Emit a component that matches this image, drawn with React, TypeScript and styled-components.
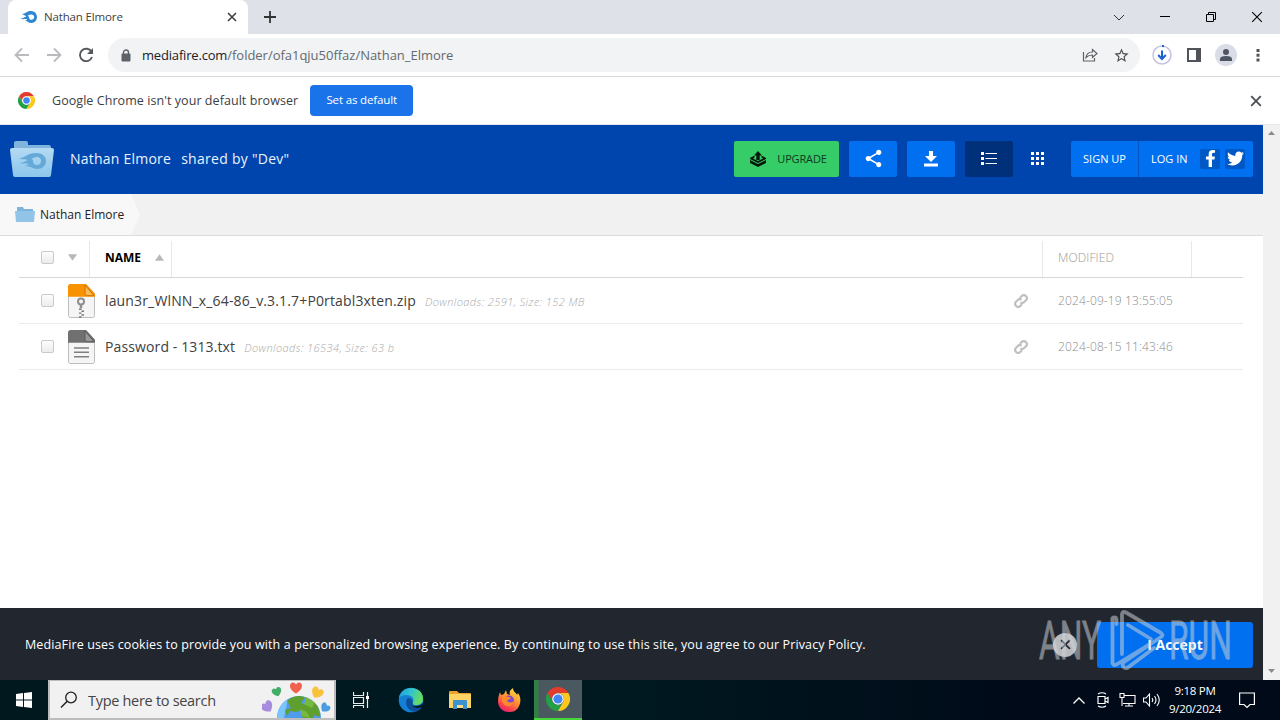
import styled, { createGlobalStyle } from "styled-components";
import { MdShare, MdStarBorder } from "react-icons/md";
import { FaFacebookF, FaTwitter } from "react-icons/fa";

const GlobalStyle = createGlobalStyle`
  * {
    box-sizing: border-box;
  }
  body {
    margin: 0;
    overflow: hidden;
    font-family: "Open Sans", "Noto Sans", sans-serif;
  }
  svg {
    display: block;
    flex: none;
  }
  button {
    border: 0;
    padding: 0;
    background: none;
    font-family: inherit;
  }
`;

const SScreen = styled.div`
  position: relative;
  width: 1280px;
  height: 720px;
  display: flex;
  flex-direction: column;
  background: white;
  overflow: hidden;
`;

const SText = styled.span<{
  $size: number;
  $color?: string;
  $spacing?: number;
  $weight?: number;
}>`
  font-size: ${({ $size }) => $size}px;
  color: ${({ $color }) => $color || "#222"};
  letter-spacing: ${({ $spacing }) => $spacing || 0}px;
  font-weight: ${({ $weight }) => $weight || 400};
  line-height: 18px;
  white-space: pre;
`;

/* browser */

const STabStrip = styled.div`
  height: 34px;
  background: #dee1e8;
  display: flex;
  align-items: center;
  padding-left: 8px;
`;

const STab = styled.div`
  width: 240px;
  height: 34px;
  background: white;
  border-radius: 8px 8px 0 0;
  display: flex;
  align-items: center;
  padding: 0 11px 0 12px;
  gap: 7px;
  & > :last-child {
    margin-left: auto;
  }
`;

const SNewTab = styled.button`
  width: 44px;
  height: 28px;
  display: flex;
  align-items: center;
  justify-content: center;
`;

const SWindowButtons = styled.div`
  margin-left: auto;
  display: flex;
  button {
    width: 46px;
    height: 28px;
    display: flex;
    align-items: center;
    justify-content: center;
  }
`;

const SToolbar = styled.div`
  height: 43px;
  display: flex;
  align-items: center;
  padding: 0 20px 0 14px;
  border-bottom: 1px solid #d8d9dc;
`;

const SNavButtons = styled.div`
  display: flex;
  gap: 16px;
  margin-right: 14px;
`;

const SAddressBar = styled.div`
  width: 1032px;
  height: 34px;
  border-radius: 17px;
  background: #f1f3f5;
  display: flex;
  align-items: center;
  padding: 0 10px 0 13px;
  gap: 15px;
`;

const SAddress = styled.div`
  flex: 1;
  display: flex;
  margin-left: -4px;
`;

const SToolbarIcons = styled.div`
  display: flex;
  align-items: center;
  margin-left: auto;
`;

const SAvatar = styled.div`
  width: 22px;
  height: 22px;
  border-radius: 50%;
  background: #dadce6;
  display: flex;
  align-items: center;
  justify-content: center;
  margin: 0 19px 0 14px;
`;

const SInfoBar = styled.div`
  height: 48px;
  display: flex;
  align-items: center;
  padding: 0 18px 0 18px;
  border-bottom: 1px solid #e3e6ea;
`;

const SDefaultButton = styled.button`
  width: 103px;
  height: 31px;
  margin-left: 12px;
  padding-bottom: 2px;
  border-radius: 4px;
  background: #1a73e8;
`;

/* page */

const SViewport = styled.div`
  height: 555px;
  display: flex;
`;

const SPage = styled.main`
  width: 1263px;
  display: flex;
  flex-direction: column;
`;

const SScrollbar = styled.div`
  width: 17px;
  background: #f1f1f1;
  display: flex;
  flex-direction: column;
  justify-content: space-between;
  align-items: center;
  padding: 6px 0 7px;
`;

const SHeader = styled.header`
  height: 69px;
  background: #0045ad;
  display: flex;
  align-items: center;
  padding: 0 10px 2px;
`;

const SOwner = styled.div`
  display: flex;
  width: 664px;
  margin-left: 16px;
  gap: 10px;
`;

const SHeaderButton = styled.button<{
  $width?: number;
  $background?: string;
  $left?: number;
}>`
  width: ${({ $width }) => $width || 48}px;
  height: 36px;
  padding-left: ${({ $left }) => $left || 0}px;
  border-radius: 2px;
  background: ${({ $background }) => $background || "#0070f0"};
  display: flex;
  align-items: center;
  justify-content: center;
  margin-right: 10px;
  gap: 11px;
`;

const SAccount = styled.div`
  width: 182px;
  height: 36px;
  margin-left: auto;
  background: #0070f0;
  border-radius: 2px;
  display: flex;
  align-items: center;
`;

const SSignUp = styled.div`
  width: 68px;
  height: 36px;
  border-right: 1px solid #0053bd;
  display: flex;
  align-items: center;
  justify-content: center;
`;

const SLogIn = styled.div`
  width: 61px;
  padding-left: 12px;
  display: flex;
`;

const SSocial = styled.div`
  width: 20px;
  height: 20px;
  margin-right: 5px;
  border-radius: 2px;
  background: #0058c4;
  display: flex;
  align-items: center;
  justify-content: center;
`;

const SBreadcrumbs = styled.nav`
  height: 42px;
  background: #f1f1f1;
  border-bottom: 1px solid #dcdcdc;
  display: flex;
`;

const SCrumb = styled.div`
  width: 140px;
  height: 41px;
  background: #f8f8f8;
  clip-path: polygon(0 0, 131px 0, 140px 50%, 131px 100%, 0 100%);
  display: flex;
  align-items: center;
  padding-left: 15px;
  gap: 5px;
`;

const STable = styled.section`
  flex: 1;
  padding: 0 19px 0 19px;
`;

const SRow = styled.div<{ $head?: boolean }>`
  height: ${({ $head }) => ($head ? 42 : 46)}px;
  width: 1224px;
  border-bottom: 1px solid ${({ $head }) => ($head ? "#d6d6d6" : "#ececec")};
  display: flex;
  align-items: center;
`;

const SHeadCell = styled.div<{
  $width: number;
  $left?: number;
  $right?: number;
}>`
  width: ${({ $width }) => $width}px;
  height: 36px;
  margin-top: 5px;
  padding: 0 ${({ $right }) => $right || 7}px 3px ${({ $left }) => $left || 0}px;
  border-right: 1px solid #e8e8e8;
  display: flex;
  align-items: center;
  justify-content: space-between;
`;

const SCheckbox = styled.div`
  width: 13px;
  height: 13px;
  border: 1px solid #cacaca;
  border-radius: 2px;
  background: linear-gradient(#fdfdfd, #ececec);
`;

const SFileName = styled.div`
  width: 890px;
  display: flex;
  padding-left: 10px;
  gap: 9px;
  align-items: center;
`;

const SDetails = styled.em`
  font-size: 11px;
  color: #aaa;
  line-height: 18px;
  letter-spacing: 0.41px;
  font-weight: 300;
  padding-top: 2px;
`;

const SRowIcon = styled.div`
  width: 29px;
  margin-left: 29px;
`;

const SCookieBar = styled.footer`
  height: 72px;
  background: #22272f;
  display: flex;
  align-items: center;
  justify-content: space-between;
  padding: 1px 10px 0 25px;
`;

const SCookieActions = styled.div`
  display: flex;
  align-items: center;
  gap: 20px;
`;

const SClose = styled.button`
  width: 24px;
  height: 24px;
  border-radius: 50%;
  background: #b9bbbd;
  display: flex;
  align-items: center;
  justify-content: center;
`;

const SAccept = styled.button`
  width: 156px;
  height: 46px;
  border-radius: 3px;
  background: #0070f0;
`;

/* taskbar */

const STaskbar = styled.div`
  height: 40px;
  background: linear-gradient(90deg, #00181e, #001820 50%, #000a18 80%);
  display: flex;
  align-items: center;
`;

const SStart = styled.div`
  width: 48px;
  display: flex;
  justify-content: center;
`;

const SSearch = styled.div`
  width: 288px;
  height: 40px;
  background: #f1f1f1;
  border: 2px solid #bcbcbc;
  border-top-width: 1px;
  display: flex;
  align-items: center;
  padding-left: 10px;
  gap: 10px;
  svg:last-child {
    margin-left: auto;
  }
`;

const STask = styled.div<{ $active?: boolean }>`
  width: ${({ $active }) => ($active ? 48 : 49)}px;
  height: 40px;
  display: flex;
  align-items: center;
  justify-content: center;
  background: ${({ $active }) =>
    $active ? "linear-gradient(90deg, #347f43 4px, #4a5960 5px)" : "none"};
  border-bottom: ${({ $active }) => ($active ? "2px solid #46d63c" : "0")};
`;

const STray = styled.div`
  margin-left: auto;
  display: flex;
  align-items: center;
  gap: 7px;
  padding-right: 25px;
`;

const SClock = styled.div`
  width: 62px;
  height: 36px;
  margin: 0 6px 0 -3px;
  display: flex;
  flex-direction: column;
  align-items: center;
`;

/* watermark over the page */

const SWatermark = styled.div`
  position: absolute;
  left: 1039px;
  top: 608px;
  height: 66px;
  display: flex;
  align-items: center;
  opacity: 0.52;
`;

const SWatermarkText = styled.div<{ $width: number }>`
  width: ${({ $width }) => $width}px;
  height: 66px;
  span {
    display: block;
    width: max-content;
    font-family: Roboto, sans-serif;
    font-size: 53px;
    line-height: 66px;
    color: #d0d4da;
    transform: scaleX(0.6);
    transform-origin: left;
    -webkit-text-stroke: 0.8px #d0d4da;
  }
`;

const Chrome = ({ size }: { size: number }) => (
  <svg width={size} height={size} viewBox="0 0 24 24">
    <path d="M1.6 6A12 12 0 0 1 22.4 6H12a6 6 0 0 0-5.2 9z" fill="#e33b2e" />
    <path d="M1.6 6A12 12 0 0 0 12 24l5.2-9A6 6 0 0 1 6.8 15z" fill="#23a047" />
    <path d="M22.4 6A12 12 0 0 1 12 24l5.2-9A6 6 0 0 0 12 6z" fill="#fcc81d" />
    <circle cx="12" cy="12" r="5.8" fill="white" />
    <circle cx="12" cy="12" r="4.6" fill="#4285f4" />
  </svg>
);

const Flame = ({ width, color }: { width: number; color: string }) => (
  <svg width={width} height={width * 0.7} viewBox="0 0 30 21">
    <path
      fill={color}
      fillRule="evenodd"
      d="M3 5C9 6 11 0 19 0c7 0 11 5 11 10.500S26 21 20 21c-5 0-7-4-11-4 2-1 3-1 4-2-4-2-8 1-13-2 5 1 7-3 11-3C8 7 6 7 3 5zM20 6c-3 0-5 1-7 3 2 0 3 1 3 2.500 0 3 2 4 4 4 3 0 5-2 5-5S23 6 20 6z"
    />
  </svg>
);

const Cross = ({
  size,
  color,
  width,
}: {
  size: number;
  color: string;
  width: number;
}) => (
  <svg width={size} height={size} viewBox="0 0 10 10">
    <path d="M1 1l8 8M9 1L1 9" stroke={color} strokeWidth={width} />
  </svg>
);

const Triangle = ({ up }: { up?: boolean }) => (
  <svg width="9" height="7" viewBox="0 0 10 7">
    <path d={up ? "M0 7L5 0l5 7z" : "M0 0h10L5 7z"} fill="#b8b8b8" />
  </svg>
);

const ScrollArrow = ({ up }: { up?: boolean }) => (
  <svg width="7" height="4" viewBox="0 0 7 4">
    <path d={up ? "M0 4L3.5 0 7 4z" : "M0 0h7L3.500 4z"} fill="#8c8c8c" />
  </svg>
);

const BigFolder = () => (
  <svg width="44" height="37" viewBox="0 0 44 37">
    <defs>
      <linearGradient id="folder" x1="0" y1="0" x2="0" y2="1">
        <stop offset="0" stopColor="#b4daf3" />
        <stop offset="1" stopColor="#8cc6ec" />
      </linearGradient>
    </defs>
    <path d="M4 3q0-2 2-2h10q2 0 2 2v2h21q2 0 2 3v5H4z" fill="#7fb4dc" />
    <path
      d="M2 8h40q2 0 2 2l-3 25q0 2-2 2H5q-2 0-2-2L0 10q0-2 2-2z"
      fill="url(#folder)"
    />
    <path
      d="M9 18c5 1 8-5 17-5 6 0 10 3 10 8s-4 8-9 8c-4 0-6-3-12-3l4-2c-4-1-6 0-10-1 4 0 6-2 9-3-3-1-6 0-9-2zM27 17c-3 0-4 1-6 2 2 0 2 1 2 2 0 3 2 4 4 4s4-1 4-4-2-4-4-4z"
      fill="#64a9d8"
      fillRule="evenodd"
    />
  </svg>
);

const SmallFolder = () => (
  <svg width="20" height="17" viewBox="0 0 20 17">
    <path d="M2 1h6l1 2h9v4H2z" fill="#7db4dd" />
    <path d="M0 5h20l-1 11H1z" fill="#92c4e8" />
  </svg>
);

const FileIcon = ({ zip }: { zip?: boolean }) => (
  <svg
    width="27"
    height="34"
    viewBox="0 0 27 35"
    preserveAspectRatio="none"
    style={{ marginTop: 1 }}
  >
    <path
      d="M2.500.5H18l8.500 9.500v22.500q0 2-2 2h-22q-2 0-2-2V2.500q0-2 2-2z"
      fill="#f5f5f5"
      stroke="#bcbcbc"
    />
    <path
      d="M0 13V3q0-3 3-3h15l9 10v3z"
      fill={zip ? "#f79200" : "#707070"}
    />
    <path
      d="M17 1v9q0 2 2 2h7z"
      fill={zip ? "#ffb84f" : "#999"}
      stroke={zip ? "#c87508" : "#5c5c5c"}
    />
    {zip ? (
      <>
        <circle
          cx="13"
          cy="18"
          r="3"
          fill="none"
          stroke="#8f8f8f"
          strokeWidth="2"
        />
        <path d="M13 21v4" stroke="#8f8f8f" strokeWidth="2.500" />
        <path
          d="M11 26h2.500M13.500 28h2.500M11 30h2.500M13.500 32h2.500M11 34h2.500"
          stroke="#777"
          strokeWidth="1.500"
        />
      </>
    ) : (
      <path
        d="M6 18.500h15M6 23h15M6 27.500h15"
        stroke="#7f7f7f"
        strokeWidth="1.600"
      />
    )}
  </svg>
);

const LinkIcon = () => (
  <svg width="14" height="14" viewBox="0 0 14 14">
    <g
      transform="rotate(-45 7 7)"
      fill="none"
      stroke="#c0c0c0"
      strokeWidth="2.200"
    >
      <path d="M5.500 10H3a3 3 0 0 1 0-6h2.500q2.500 0 2.800 2.500" />
      <path d="M8.500 4H11a3 3 0 0 1 0 6H8.500Q6 10 5.700 7.500" />
    </g>
  </svg>
);

const EarthArt = () => (
  <svg width="72" height="37" viewBox="0 0 72 37">
    <defs>
      <clipPath id="globe">
        <circle cx="37" cy="37" r="22" />
      </clipPath>
      <path
        id="heart"
        d="M0 5.500C-9 0-6-5.500-3-5.500q2 0 3 2 1-2 3-2C6-5.500 9 0 0 5.500z"
      />
    </defs>
    <g clipPath="url(#globe)">
      <path d="M10 10h60v30H10z" fill="#519bed" />
      <path d="M15 37q0-15 11-20l-4 20z" fill="#79c5fa" />
      <path
        d="M25 20q8-8 18-4l-4 6 5 2 4-5 8 5 2 12-6-2-2 5-9-1-1-4 4-1-5-4-5 2-6-1-3 5-2-6 6-2z"
        fill="#5f9f2e"
      />
      <path d="M42 14l11 7-3 6-8-4 2-4zM38 28l7 3 3 6-8-2z" fill="#78b83c" />
    </g>
    <use href="#heart" transform="translate(34 7)" fill="#f1614d" />
    <use href="#heart" transform="translate(15 11) rotate(-20) scale(.8)" fill="#42ad68" />
    <use href="#heart" transform="translate(55 12) rotate(28)" fill="#f8c33b" />
    <use href="#heart" transform="translate(5.500 26) rotate(-35)" fill="#a88bdc" />
    <use href="#heart" transform="translate(63 27) rotate(38) scale(.8)" fill="#4a9de0" />
  </svg>
);

const EdgeIcon = () => (
  <svg width="26" height="26" viewBox="0 0 26 26">
    <defs>
      <linearGradient id="edgeTop" x1="0" y1="0" x2="1" y2="0.300">
        <stop offset="0" stopColor="#1f9be0" />
        <stop offset="0.500" stopColor="#2ec3d2" />
        <stop offset="1" stopColor="#66dc62" />
      </linearGradient>
    </defs>
    <circle cx="13" cy="13" r="12.300" fill="#1480d3" />
    <path
      d="M1 11C2 5 7 1 13 1c8 0 12 5 12 11 0 4-3 6-7 6-3 0-4-1-3-3 2-4-2-7-6-7-4 0-7 1-8 3z"
      fill="url(#edgeTop)"
    />
    <path
      d="M9 12c-3 5 1 12 8 13 3-.5 6-3 7-5-4 2-9 1-10-2-1-2 2-3 0-5-1-2-4-3-5-1z"
      fill="#0e4f9c"
    />
    <path
      d="M15 15c-2 3 0 4 3 4 3 0 5-1 7-3l-1 4c-4 2-9 1-10-2-.5-1 0-2 1-3z"
      fill="#001820"
    />
  </svg>
);

const ExplorerIcon = () => (
  <svg width="22" height="20" viewBox="0 0 22 20">
    <path d="M0 2q0-1 1-1h7l2 2h11q1 0 1 1v14H0z" fill="#eaa32d" />
    <path d="M0 4h22v14H0z" fill="#fcd565" />
    <path d="M4 19v-8q0-1 1-1h12q1 0 1 1v8h-4v-4H8v4z" fill="#3d91cf" />
    <path d="M8 15h6v3H8z" fill="#f6dd8c" />
  </svg>
);

const FirefoxIcon = () => (
  <svg width="24" height="25" viewBox="0 0 24 25">
    <defs>
      <linearGradient id="fox" x1="0.800" y1="0" x2="0.250" y2="1">
        <stop offset="0" stopColor="#ffe14a" />
        <stop offset="0.450" stopColor="#ff9330" />
        <stop offset="0.800" stopColor="#fa3d50" />
        <stop offset="1" stopColor="#e51f7b" />
      </linearGradient>
    </defs>
    <path
      d="M3 4l1 3 3-1 2-4 1 4 3 1c-1-3 0-5 3-7 0 4 3 4 4 7l1-2c3 4 3 9 1 13-2 5-6 6-10 6C5 24 1 19 1 13c0-4 1-6 2-9z"
      fill="url(#fox)"
    />
    <circle cx="12" cy="12.500" r="5" fill="#7948d6" />
    <path d="M5 9c3-2 5 0 7 0l2 1c-1 2-3 1-4 3 2 2 4 2 7 0-1 4-3 5-6 5-4 0-7-4-6-9z" fill="#ff8a2c" />
  </svg>
);

const files = [
  {
    name: "laun3r_WlNN_x_64-86_v.3.1.7+P0rtabl3xten.zip",
    details: "Downloads: 2591, Size: 152 MB",
    modified: "2024-09-19 13:55:05",
    zip: true,
  },
  {
    name: "Password - 1313.txt",
    details: "Downloads: 16534, Size: 63 b",
    modified: "2024-08-15 11:43:46",
    zip: false,
  },
];

const Browser = () => (
  <>
    <STabStrip>
      <STab>
        <Flame width={17} color="#2f86d3" />
        <SText $size={11.5} $color="#414141" $spacing={-0.15}>
          Nathan Elmore
        </SText>
        <Cross size={10} color="#3c4043" width={1.6} />
      </STab>
      <SNewTab>
        <svg width="12" height="12" viewBox="0 0 12 12">
          <path d="M6 0v12M0 6h12" stroke="#333" strokeWidth="1.800" />
        </svg>
      </SNewTab>
      <SWindowButtons>
        <button>
          <svg width="12" height="7" viewBox="0 0 12 7">
            <path d="M1 1l5 5 5-5" stroke="#333" fill="none" />
          </svg>
        </button>
        <button>
          <svg width="10" height="2" viewBox="0 0 10 2">
            <path d="M0 .5h10" stroke="black" />
          </svg>
        </button>
        <button>
          <svg width="11" height="11" viewBox="0 0 11 11">
            <path
              d="M.5 2.500h7v7h-7zM2.500 2.500v-2h7v7h-2"
              fill="none"
              stroke="black"
            />
          </svg>
        </button>
        <button>
          <Cross size={12} color="black" width={0.9} />
        </button>
      </SWindowButtons>
    </STabStrip>
    <SToolbar>
      <SNavButtons>
        <svg width="16" height="16" viewBox="0 0 16 16">
          <path d="M15 8H2M8 1.500L1.500 8 8 14.500" fill="none" stroke="#b9bbbe" strokeWidth="1.800" />
        </svg>
        <svg width="16" height="16" viewBox="0 0 16 16">
          <path d="M1 8h13M8 1.500L14.500 8 8 14.500" fill="none" stroke="#b9bbbe" strokeWidth="1.800" />
        </svg>
        <svg width="16" height="16" viewBox="0 0 16 16">
          <path d="M13.500 4.800A6.200 6.200 0 1 0 14 10" fill="none" stroke="#55585d" strokeWidth="1.900" />
          <path d="M15 1v6H9z" fill="#55585d" />
        </svg>
      </SNavButtons>
      <SAddressBar>
        <svg width="10" height="13" viewBox="0 0 10 13">
          <path d="M2.500 5V3.500a2.500 2.500 0 0 1 5 0V5" fill="none" stroke="#5f6368" strokeWidth="1.400" />
          <rect y="4.500" x="0.500" width="9" height="8" rx="1" fill="#5f6368" />
        </svg>
        <SAddress>
          <SText $size={13} $color="#202124" $spacing={-0.18}>
            mediafire.com
          </SText>
          <SText $size={13} $color="#65696e" $spacing={-0.02}>
            /folder/ofa1qju50ffaz/Nathan_Elmore
          </SText>
        </SAddress>
        <svg width="16" height="14" viewBox="0 0 16 14">
          <path d="M1.500 4v9h11v-3" fill="none" stroke="#5f6368" strokeWidth="1.200" />
          <path
            d="M4 9.500c.5-3.500 3-5.500 6.500-5.500V1.500L15 5.500l-4.500 4V7C8 7 6 7.500 4 9.500z"
            fill="none"
            stroke="#5f6368"
            strokeWidth="1.200"
          />
        </svg>
        <MdStarBorder size={17} color="#4b4f54" />
      </SAddressBar>
      <SToolbarIcons>
        <svg width="20" height="20" viewBox="0 0 20 20">
          <circle cx="10" cy="10" r="9" fill="none" stroke="#c5c5e4" strokeWidth="1.600" />
          <path d="M10 1a9 9 0 0 1 2 .2" stroke="#1a61c8" strokeWidth="2" fill="none" />
          <path d="M10 5.500v8M6.200 10l3.800 4 3.800-4" fill="none" stroke="#1862cf" strokeWidth="2" />
        </svg>
        <svg width="14" height="14" viewBox="0 0 14 14" style={{ marginLeft: 15 }}>
          <path d="M1 1h12v12H1z" fill="none" stroke="#50545a" strokeWidth="2" />
          <path d="M9 1h5v12H9z" fill="#50545a" />
        </svg>
        <SAvatar>
          <svg width="14" height="14" viewBox="0 0 14 14">
            <circle cx="7" cy="4" r="3" fill="#505563" />
            <path d="M1 13v-2q0-3 6-3t6 3v2z" fill="#505563" />
          </svg>
        </SAvatar>
        <svg width="4" height="14" viewBox="0 0 4 14">
          <path d="M.5 1h3v3h-3zM.5 5.700h3v3h-3zM.5 10.400h3v3h-3z" fill="#50545a" />
        </svg>
      </SToolbarIcons>
    </SToolbar>
    <SInfoBar>
      <Chrome size={17} />
      <SText
        $size={12.5}
        $color="#3c4043"
        $spacing={0.06}
        style={{ marginLeft: 17 }}
      >
        Google Chrome isn't your default browser
      </SText>
      <SDefaultButton>
        <SText $size={11.5} $color="white" $spacing={-0.15}>
          Set as default
        </SText>
      </SDefaultButton>
      <SWindowButtons>
        <Cross size={12} color="#4b4e52" width={1.5} />
      </SWindowButtons>
    </SInfoBar>
  </>
);

const Header = () => (
  <SHeader>
    <BigFolder />
    <SOwner>
      <SText $size={14} $color="#e9f4ff" $spacing={0.23}>
        Nathan Elmore
      </SText>
      <SText $size={14} $color="#e9f4ff" $spacing={0.27}>
        shared by "Dev"
      </SText>
    </SOwner>
    <SHeaderButton $width={105} $left={4} $background="#36cc68">
      <svg width="16" height="16" viewBox="0 0 16 16">
        <path d="M8 0l4 4.500h-2.300V9H6.300V4.500H4z" fill="#06180c" />
        <path d="M0 7l4.500-2.500v2L3 7.500 8 10l5-2.500-1.500-1v-2L16 7v1l-8 4-8-4z" fill="#06180c" />
        <path d="M0 9l8 4 8-4v3l-8 4-8-4z" fill="#06180c" />
      </svg>
      <SText $size={11} $color="#0d381d" $spacing={-0.15}>
        UPGRADE
      </SText>
    </SHeaderButton>
    <SHeaderButton>
      <MdShare size={21} color="white" />
    </SHeaderButton>
    <SHeaderButton>
      <svg width="14" height="16" viewBox="0 0 14 16">
        <path d="M5 0h4v5h4l-6 6-6-6h4zM0 12.500h14v3H0z" fill="white" />
      </svg>
    </SHeaderButton>
    <SHeaderButton $background="#00307a">
      <svg width="16" height="14" viewBox="0 0 16 14">
        <path
          d="M0 0h3v3H0zM0 5h3v3H0zM0 10h3v3H0zM4.500 1H16v1H4.500zM4.500 6H16v1H4.500zM4.500 11H16v1H4.500z"
          fill="white"
        />
      </svg>
    </SHeaderButton>
    <SHeaderButton $width={29} $background="none">
      <svg width="13" height="13" viewBox="0 0 13 13">
        <path
          d="M0 0h3v3H0zM5 0h3v3H5zM10 0h3v3h-3zM0 5h3v3H0zM5 5h3v3H5zM10 5h3v3h-3zM0 10h3v3H0zM5 10h3v3H5zM10 10h3v3h-3z"
          fill="white"
        />
      </svg>
    </SHeaderButton>
    <SAccount>
      <SSignUp>
        <SText $size={11} $color="white">
          SIGN UP
        </SText>
      </SSignUp>
      <SLogIn>
        <SText $size={11} $color="white">
          LOG IN
        </SText>
      </SLogIn>
      <SSocial>
        <FaFacebookF size={17} color="white" />
      </SSocial>
      <SSocial>
        <FaTwitter size={17} color="white" />
      </SSocial>
    </SAccount>
  </SHeader>
);

const FileTable = () => (
  <STable>
    <SRow $head>
      <SHeadCell $width={71} $left={22} $right={12}>
        <SCheckbox />
        <Triangle />
      </SHeadCell>
      <SHeadCell $width={82} $left={15}>
        <SText $size={12} $color="black" $weight={700}>
          NAME
        </SText>
        <Triangle up />
      </SHeadCell>
      <SHeadCell $width={871} />
      <SHeadCell $width={149} $left={15}>
        <SText $size={12} $color="#999" $weight={300} $spacing={0.1}>
          MODIFIED
        </SText>
      </SHeadCell>
    </SRow>
    {files.map((file) => (
      <SRow key={file.name}>
        <SCheckbox style={{ marginLeft: 22, marginRight: 14 }} />
        <FileIcon zip={file.zip} />
        <SFileName>
          <SText $size={14} $color="#404040" $spacing={file.zip ? 0.15 : 0.12}>
            {file.name}
          </SText>
          <SDetails>{file.details}</SDetails>
        </SFileName>
        <SRowIcon>
          <LinkIcon />
        </SRowIcon>
        <SText
          $size={12}
          $color="#8c8c8c"
          $weight={300}
          $spacing={0.13}
          style={{ marginLeft: 15, paddingTop: 1 }}
        >
          {file.modified}
        </SText>
      </SRow>
    ))}
  </STable>
);

const Taskbar = () => (
  <STaskbar>
    <SStart>
      <svg width="16" height="16" viewBox="0 0 16 16">
        <path d="M0 2l7-1v6.500H0zM8 1l8-1v7.500H8zM0 8.500h7V15l-7-1zM8 8.500h8V16l-8-1z" fill="white" />
      </svg>
    </SStart>
    <SSearch>
      <svg width="18" height="18" viewBox="0 0 18 18">
        <circle cx="11" cy="6.500" r="5.300" fill="none" stroke="#222" strokeWidth="1.300" />
        <path d="M7.200 10.300L1 16.500" stroke="#222" strokeWidth="1.500" />
      </svg>
      <SText
        $size={14.5}
        $color="#444"
        $spacing={-0.3}
        style={{ paddingTop: 2 }}
      >
        Type here to search
      </SText>
      <EarthArt />
    </SSearch>
    <STask>
      <svg width="16" height="16" viewBox="0 0 16 16">
        <path
          d="M.5 0v3.500h10V0M.5 5.500h10v6H.5zM.5 16v-2.500h10V16M14.500 0v16"
          fill="none"
          stroke="#e8eef0"
          strokeWidth="1.200"
        />
        <path d="M13 4h3v3h-3z" fill="white" />
      </svg>
    </STask>
    <STask style={{ marginLeft: 1 }}>
      <EdgeIcon />
    </STask>
    <STask>
      <ExplorerIcon />
    </STask>
    <STask>
      <FirefoxIcon />
    </STask>
    <STask $active style={{ marginLeft: 1 }}>
      <Chrome size={24} />
    </STask>
    <STray>
      <svg width="12" height="7" viewBox="0 0 12 7">
        <path d="M.5 6.500L6 1l5.500 5.500" fill="none" stroke="white" strokeWidth="1.300" />
      </svg>
      <svg width="16" height="16" viewBox="0 0 16 16" style={{ marginLeft: 3 }}>
        <path d="M3 4.500h7v7H3zM10 7l3-1.500v5L10 9M3 2q4-2.500 8 0M3 14q4 2.500 8 0" fill="none" stroke="white" strokeWidth="1.200" />
      </svg>
      <svg width="17" height="14" viewBox="0 0 17 14" style={{ marginLeft: 1 }}>
        <path d="M5 2.500h11v8H4M10 10.500v3M6 13h8M1 .5h4v4H1zM3 4.500V13" fill="none" stroke="white" strokeWidth="1.100" />
      </svg>
      <svg width="17" height="14" viewBox="0 0 17 14">
        <path d="M.5 5H3l3.500-4v12L3 9H.5zM9 5q1.500 2 0 4M11.500 3q3 4 0 8M14 1q4.500 6 0 12" fill="none" stroke="white" strokeWidth="1.100" />
      </svg>
      <SClock>
        <SText $size={11.5} $color="white" $spacing={-0.25}>
          9:18 PM
        </SText>
        <SText $size={11.5} $color="white" $spacing={-0.25}>
          9/20/2024
        </SText>
      </SClock>
      <svg width="16" height="17" viewBox="0 0 16 17">
        <path d="M.6 1h14.800v11.500H11l-3 3-3-3H.6z" fill="none" stroke="white" strokeWidth="1.200" />
      </svg>
    </STray>
  </STaskbar>
);

const Watermark = () => (
  <SWatermark>
    <SWatermarkText $width={70}>
      <span>ANY</span>
    </SWatermarkText>
    <svg width="58" height="66" viewBox="0 0 58 66">
      <g
        fill="none"
        stroke="#d0d4da"
        strokeWidth="3.800"
        strokeLinejoin="round"
        strokeLinecap="round"
      >
        <path d="M7.500 16v-4q0-2.500-2.500-2.500T3.500 13v42q.5 3 4 1.500L41 36" />
        <path d="M13 46V6q.5-3 4-1.500L52 25q3 2 0 4L15 54q-2.500 2-.5 5 2 2 4.500.5L45 40" />
        <path d="M19 17l23 14" />
      </g>
    </svg>
    <SWatermarkText $width={64} style={{ marginLeft: 2 }}>
      <span>RUN</span>
    </SWatermarkText>
  </SWatermark>
);

const App = () => {
  return (
    <SScreen>
      <GlobalStyle />
      <Browser />
      <SViewport>
        <SPage>
          <Header />
          <SBreadcrumbs>
            <SCrumb>
              <SmallFolder />
              <SText $size={12} $color="#222">
                Nathan Elmore
              </SText>
            </SCrumb>
          </SBreadcrumbs>
          <FileTable />
          <SCookieBar>
            <SText $size={12.5} $color="white" $spacing={0.122}>
              MediaFire uses cookies to provide you with a personalized browsing
              experience. By continuing to use this site, you agree to our
              Privacy Policy.
            </SText>
            <SCookieActions>
              <SClose>
                <Cross size={11} color="#22272f" width={1.6} />
              </SClose>
              <SAccept>
                <SText $size={14} $color="white" $weight={700}>
                  I Accept
                </SText>
              </SAccept>
            </SCookieActions>
          </SCookieBar>
        </SPage>
        <SScrollbar>
          <ScrollArrow up />
          <ScrollArrow />
        </SScrollbar>
      </SViewport>
      <Taskbar />
      <Watermark />
    </SScreen>
  );
};

export default App;
